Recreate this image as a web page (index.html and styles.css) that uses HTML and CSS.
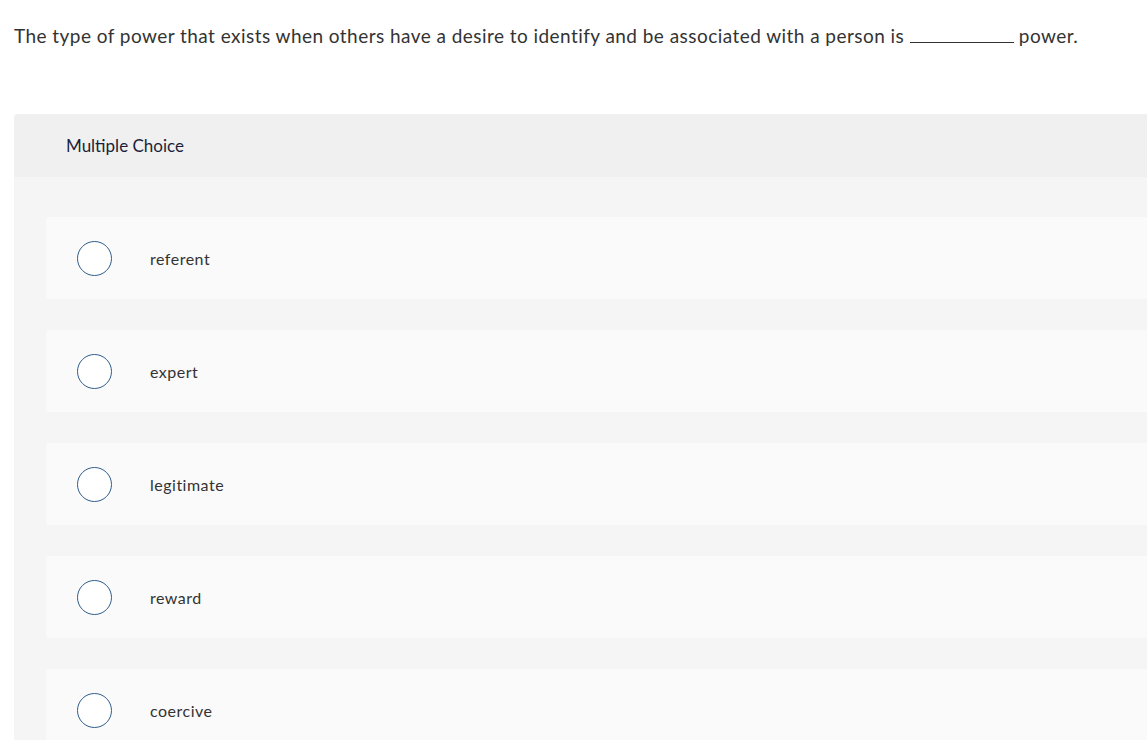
FILE: index.html
```html
<!DOCTYPE html>
<html>
<head>
<meta charset="utf-8">
<link rel="stylesheet" href="styles.css">
</head>
<body>
<div class="page">
  <p class="question">The type of power that exists when others have a desire to identify and be associated with a person is <span class="blank"></span> power.</p>
  <section class="panel">
    <div class="panel-head">Multiple Choice</div>
    <div class="panel-body">
      <label class="option"><span class="radio"></span><span class="opt-text">referent</span></label>
      <label class="option"><span class="radio"></span><span class="opt-text">expert</span></label>
      <label class="option"><span class="radio"></span><span class="opt-text">legitimate</span></label>
      <label class="option"><span class="radio"></span><span class="opt-text">reward</span></label>
      <label class="option"><span class="radio"></span><span class="opt-text">coercive</span></label>
    </div>
  </section>
</div>
</body>
</html>
```
FILE: styles.css
```css
html, body {
  margin: 0;
  padding: 0;
  background: #ffffff;
  overflow: hidden;
}
.page {
  font-family: Lato, "Open Sans", sans-serif;
  color: #333333;
  padding: 0 0 0 14px;
  width: 1200px;
}
.question {
  margin: 0;
  padding-top: 23px;
  font-size: 19px;
  line-height: 26px;
  letter-spacing: 0.45px;
  color: #333333;
}
.blank {
  display: inline-block;
  width: 104px;
  border-bottom: 1px solid #333333;
  vertical-align: baseline;
  height: 1px;
}
.panel {
  margin-top: 65px;
  border-radius: 4px 0 0 0;
  overflow: hidden;
}
.panel-head {
  background: #f0f0f0;
  height: 63px;
  display: flex;
  align-items: center;
  padding-left: 52px;
  font-size: 17px;
  color: #1b1f3b;
}
.panel-body {
  background: #f5f5f5;
  padding: 40px 0 0 32px;
  display: flex;
  flex-direction: column;
  gap: 31px;
}
.option {
  background: #fafafa;
  height: 82px;
  border-radius: 4px 0 0 4px;
  display: flex;
  align-items: center;
  padding-left: 31px;
}
.radio {
  width: 33px;
  height: 33px;
  border: 1.5px solid #2f5d8c;
  border-radius: 50%;
  background: #ffffff;
  flex: none;
}
.opt-text {
  margin-left: 38px;
  font-size: 16px;
  letter-spacing: 0.5px;
  color: #333333;
}
```
